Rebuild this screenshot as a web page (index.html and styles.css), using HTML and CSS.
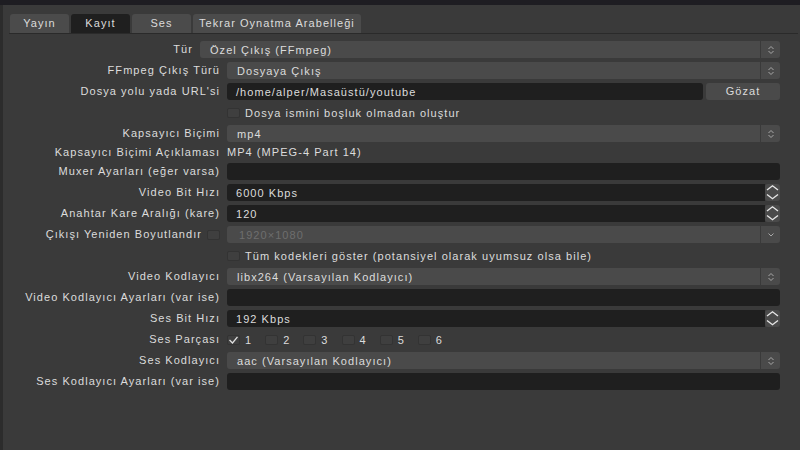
FILE: index.html
```html
<!DOCTYPE html>
<html lang="tr">
<head>
<meta charset="utf-8">
<title>Çıkış - Kayıt</title>
<link rel="stylesheet" href="styles.css">
</head>
<body>
<div class="topbar"></div>
<div class="window">
  <div class="strip"></div>
  <div class="main">
    <div class="tabs">
      <div class="tab">Yayın</div>
      <div class="tab active">Kayıt</div>
      <div class="tab">Ses</div>
      <div class="tab">Tekrar Oynatma Arabelleği</div>
    </div>

    <div class="form outer">
      <div class="label">Tür</div>
      <div class="combo"><span class="val">Özel Çıkış (FFmpeg)</span><span class="arrow"><svg width="8" height="10" viewBox="0 0 8 10"><path d="M1.5 4 L4 1.5 L6.5 4 M1.5 6 L4 8.5 L6.5 6" fill="none" stroke="#a8a8a8" stroke-width="1"/></svg></span></div>
    </div>

    <div class="form inner">
      <div class="label">FFmpeg Çıkış Türü</div>
      <div class="combo"><span class="val">Dosyaya Çıkış</span><span class="arrow"><svg width="8" height="10" viewBox="0 0 8 10"><path d="M1.5 4 L4 1.5 L6.5 4 M1.5 6 L4 8.5 L6.5 6" fill="none" stroke="#a8a8a8" stroke-width="1"/></svg></span></div>

      <div class="label">Dosya yolu yada URL'si</div>
      <div class="pathrow">
        <div class="input"><span class="val">/home/alper/Masaüstü/youtube</span></div>
        <div class="button">Gözat</div>
      </div>

      <div class="label"></div>
      <div class="checkrow"><span class="check"></span><span>Dosya ismini boşluk olmadan oluştur</span></div>

      <div class="label">Kapsayıcı Biçimi</div>
      <div class="combo"><span class="val">mp4</span><span class="arrow"><svg width="8" height="10" viewBox="0 0 8 10"><path d="M1.5 4 L4 1.5 L6.5 4 M1.5 6 L4 8.5 L6.5 6" fill="none" stroke="#a8a8a8" stroke-width="1"/></svg></span></div>

      <div class="label">Kapsayıcı Biçimi Açıklaması</div>
      <div class="text">MP4 (MPEG-4 Part 14)</div>

      <div class="label">Muxer Ayarları (eğer varsa)</div>
      <div class="input"></div>

      <div class="label">Video Bit Hızı</div>
      <div class="spinbox">
        <div class="input"><span class="val">6000 Kbps</span></div>
        <div class="spin"><svg width="15" height="17" viewBox="0 0 15 17"><path d="M2 6 L7.5 1.8 L13 6 M2 10.5 L7.5 14.7 L13 10.5" fill="none" stroke="#e6e6e6" stroke-width="1.4"/></svg></div>
      </div>

      <div class="label">Anahtar Kare Aralığı (kare)</div>
      <div class="spinbox">
        <div class="input"><span class="val">120</span></div>
        <div class="spin"><svg width="15" height="17" viewBox="0 0 15 17"><path d="M2 6 L7.5 1.8 L13 6 M2 10.5 L7.5 14.7 L13 10.5" fill="none" stroke="#e6e6e6" stroke-width="1.4"/></svg></div>
      </div>

      <div class="label labelcheck"><span>Çıkışı Yeniden Boyutlandır</span><span class="check"></span></div>
      <div class="combo disabled"><span class="val">1920×1080</span><span class="arrow"><svg width="8" height="6" viewBox="0 0 8 6"><path d="M1.5 1.5 L4 4 L6.5 1.5" fill="none" stroke="#a8a8a8" stroke-width="1"/></svg></span></div>

      <div class="label"></div>
      <div class="checkrow"><span class="check"></span><span>Tüm kodekleri göster (potansiyel olarak uyumsuz olsa bile)</span></div>

      <div class="label">Video Kodlayıcı</div>
      <div class="combo"><span class="val">libx264 (Varsayılan Kodlayıcı)</span><span class="arrow"><svg width="8" height="10" viewBox="0 0 8 10"><path d="M1.5 4 L4 1.5 L6.5 4 M1.5 6 L4 8.5 L6.5 6" fill="none" stroke="#a8a8a8" stroke-width="1"/></svg></span></div>

      <div class="label">Video Kodlayıcı Ayarları (var ise)</div>
      <div class="input"></div>

      <div class="label">Ses Bit Hızı</div>
      <div class="spinbox">
        <div class="input"><span class="val">192 Kbps</span></div>
        <div class="spin"><svg width="15" height="17" viewBox="0 0 15 17"><path d="M2 6 L7.5 1.8 L13 6 M2 10.5 L7.5 14.7 L13 10.5" fill="none" stroke="#e6e6e6" stroke-width="1.4"/></svg></div>
      </div>

      <div class="label">Ses Parçası</div>
      <div class="tracks">
        <div class="opt"><span class="check checked"><svg width="11" height="8" viewBox="0 0 11 8"><path d="M1.5 4 L4.5 7 L9.5 0.8" fill="none" stroke="#e0e0e0" stroke-width="1.3"/></svg></span><span>1</span></div>
        <div class="opt"><span class="check"></span><span>2</span></div>
        <div class="opt"><span class="check"></span><span>3</span></div>
        <div class="opt"><span class="check"></span><span>4</span></div>
        <div class="opt"><span class="check"></span><span>5</span></div>
        <div class="opt"><span class="check"></span><span>6</span></div>
      </div>

      <div class="label">Ses Kodlayıcı</div>
      <div class="combo"><span class="val">aac (Varsayılan Kodlayıcı)</span><span class="arrow"><svg width="8" height="10" viewBox="0 0 8 10"><path d="M1.5 4 L4 1.5 L6.5 4 M1.5 6 L4 8.5 L6.5 6" fill="none" stroke="#a8a8a8" stroke-width="1"/></svg></span></div>

      <div class="label">Ses Kodlayıcı Ayarları (var ise)</div>
      <div class="input"></div>
    </div>
  </div>
</div>
</body>
</html>
```

FILE: styles.css
```css
* { box-sizing: border-box; }
html, body { margin: 0; padding: 0; }
body {
  width: 800px;
  height: 450px;
  overflow: hidden;
  background: #3a3a3a;
  color: #dcdcdc;
  font-family: "Liberation Sans", Arial, sans-serif;
  font-size: 11px;
  letter-spacing: 1.05px;
}
.topbar { height: 5px; background: #1e1d22; }
.window { display: flex; height: 445px; }
.strip { width: 3px; background: #2c2c2c; }
.main { flex: 1; }

.tabs {
  display: flex;
  gap: 2px;
  margin: 9px 2px 0 6px;
  padding-left: 1px;
  border-bottom: 1px solid #2a2a2a;
}
.tab {
  height: 19px;
  line-height: 19px;
  min-width: 59px;
  padding: 0 6px;
  text-align: center;
  background: #4b4b4b;
  border-radius: 3px 3px 0 0;
  white-space: nowrap;
}
.tab.active { background: #1f1f1f; }

.form {
  display: grid;
  column-gap: 7px;
  row-gap: 4px;
  margin-right: 20px;
  align-items: center;
}
.outer { grid-template-columns: 190px 1fr; margin-top: 7px; }
.inner { grid-template-columns: 217px 1fr; margin-top: 4px; }

.label { text-align: right; white-space: nowrap; line-height: 13px; }
.labelcheck { display: flex; justify-content: flex-end; align-items: center; gap: 5px; }

.val { padding-left: 10px; white-space: nowrap; }

.combo {
  height: 17px;
  display: flex;
  align-items: center;
  background: #4a4a4a;
  border-radius: 3px;
}
.combo .arrow {
  margin-left: auto;
  width: 20px;
  height: 17px;
  border-left: 1px solid #3a3a3a;
  display: flex;
  align-items: center;
  justify-content: center;
}
.combo.disabled { color: #6e6e6e; }
.combo.disabled .val { padding-left: 12px; }

.input {
  height: 17px;
  display: flex;
  align-items: center;
  background: #1f1f1f;
  border-radius: 3px;
}
.input .val { padding-left: 9px; }

.pathrow { display: flex; gap: 3px; }
.pathrow .input { flex: 1; }
.button {
  width: 74px;
  height: 17px;
  line-height: 17px;
  text-align: center;
  background: #4a4a4a;
  border-radius: 3px;
}

.spinbox { display: flex; height: 17px; }
.spinbox .input { flex: 1; border-radius: 3px 0 0 3px; }
.spin {
  width: 15px;
  height: 17px;
  background: #4a4a4a;
  border-radius: 3px;
  display: flex;
}

.text { line-height: 13px; white-space: nowrap; }

.checkrow { height: 17px; display: flex; align-items: center; gap: 5px; white-space: nowrap; }
.check {
  width: 13px;
  height: 10px;
  background: #3f3f3f;
  border: 1px solid #333333;
  border-radius: 2px;
  display: inline-flex;
  align-items: center;
  justify-content: center;
  flex: none;
}

.tracks { height: 17px; display: flex; align-items: center; gap: 13px; }
.opt { display: flex; align-items: center; gap: 5px; }
```
